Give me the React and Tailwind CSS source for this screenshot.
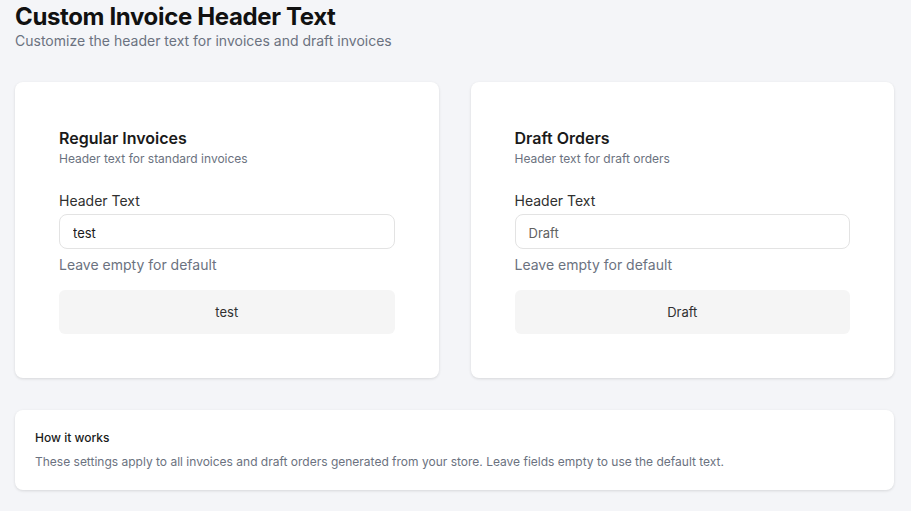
import React from 'react';

const HeaderCard = ({ title, subtitle, value, placeholder }) => {
  return (
    <div className="bg-white rounded-lg shadow-[0_1px_3px_rgba(0,0,0,0.12)] p-11">
      <h2 className="text-base leading-6 font-semibold text-[#1a1a1a]">{title}</h2>
      <p className="text-xs leading-4 mt-px text-[#6b7280]">{subtitle}</p>

      <label className="block mt-6 text-sm leading-5 text-[#303030]">Header Text</label>
      <input
        type="text"
        defaultValue={value}
        placeholder={placeholder}
        className="mt-[3px] w-full h-[35px] px-[13px] pt-0.5 text-[13px] text-[#1a1a1a] placeholder:text-[#616161] bg-white border border-[#e3e3e3] rounded-lg focus:outline-none"
      />
      <p className="mt-1.5 text-sm leading-5 text-[#6b7280]">Leave empty for default</p>

      <div className="mt-[15px] h-[44px] flex items-center justify-center pt-0.5 bg-[#f5f5f5] rounded-md text-[13px] text-[#303030]">
        {value || placeholder}
      </div>
    </div>
  );
};

const App = () => {
  return (
    <div className="min-h-screen bg-[#f4f5f8] pl-[15px] pr-[17px] pt-[3px] pb-6 font-['Inter',sans-serif]">
      {/* Page header */}
      <h1 className="text-2xl leading-7 font-bold text-[#111111] tracking-[-0.015em]">Custom Invoice Header Text</h1>
      <p className="text-sm leading-5 text-[#6b7280]">Customize the header text for invoices and draft invoices</p>

      {/* Two cards */}
      <div className="mt-[31px] grid grid-cols-2 gap-8">
        <HeaderCard title="Regular Invoices" subtitle="Header text for standard invoices" value="test" />
        <HeaderCard title="Draft Orders" subtitle="Header text for draft orders" placeholder="Draft" />
      </div>

      {/* Info */}
      <div className="mt-8 bg-white rounded-lg shadow-[0_1px_3px_rgba(0,0,0,0.12)] px-5 py-5">
        <h3 className="text-xs leading-4 font-medium text-[#1a1a1a]">How it works</h3>
        <p className="mt-2 text-xs leading-4 text-[#6b7280]">
          These settings apply to all invoices and draft orders generated from your store. Leave fields empty to use the default text.
        </p>
      </div>
    </div>
  );
};

export default App;
